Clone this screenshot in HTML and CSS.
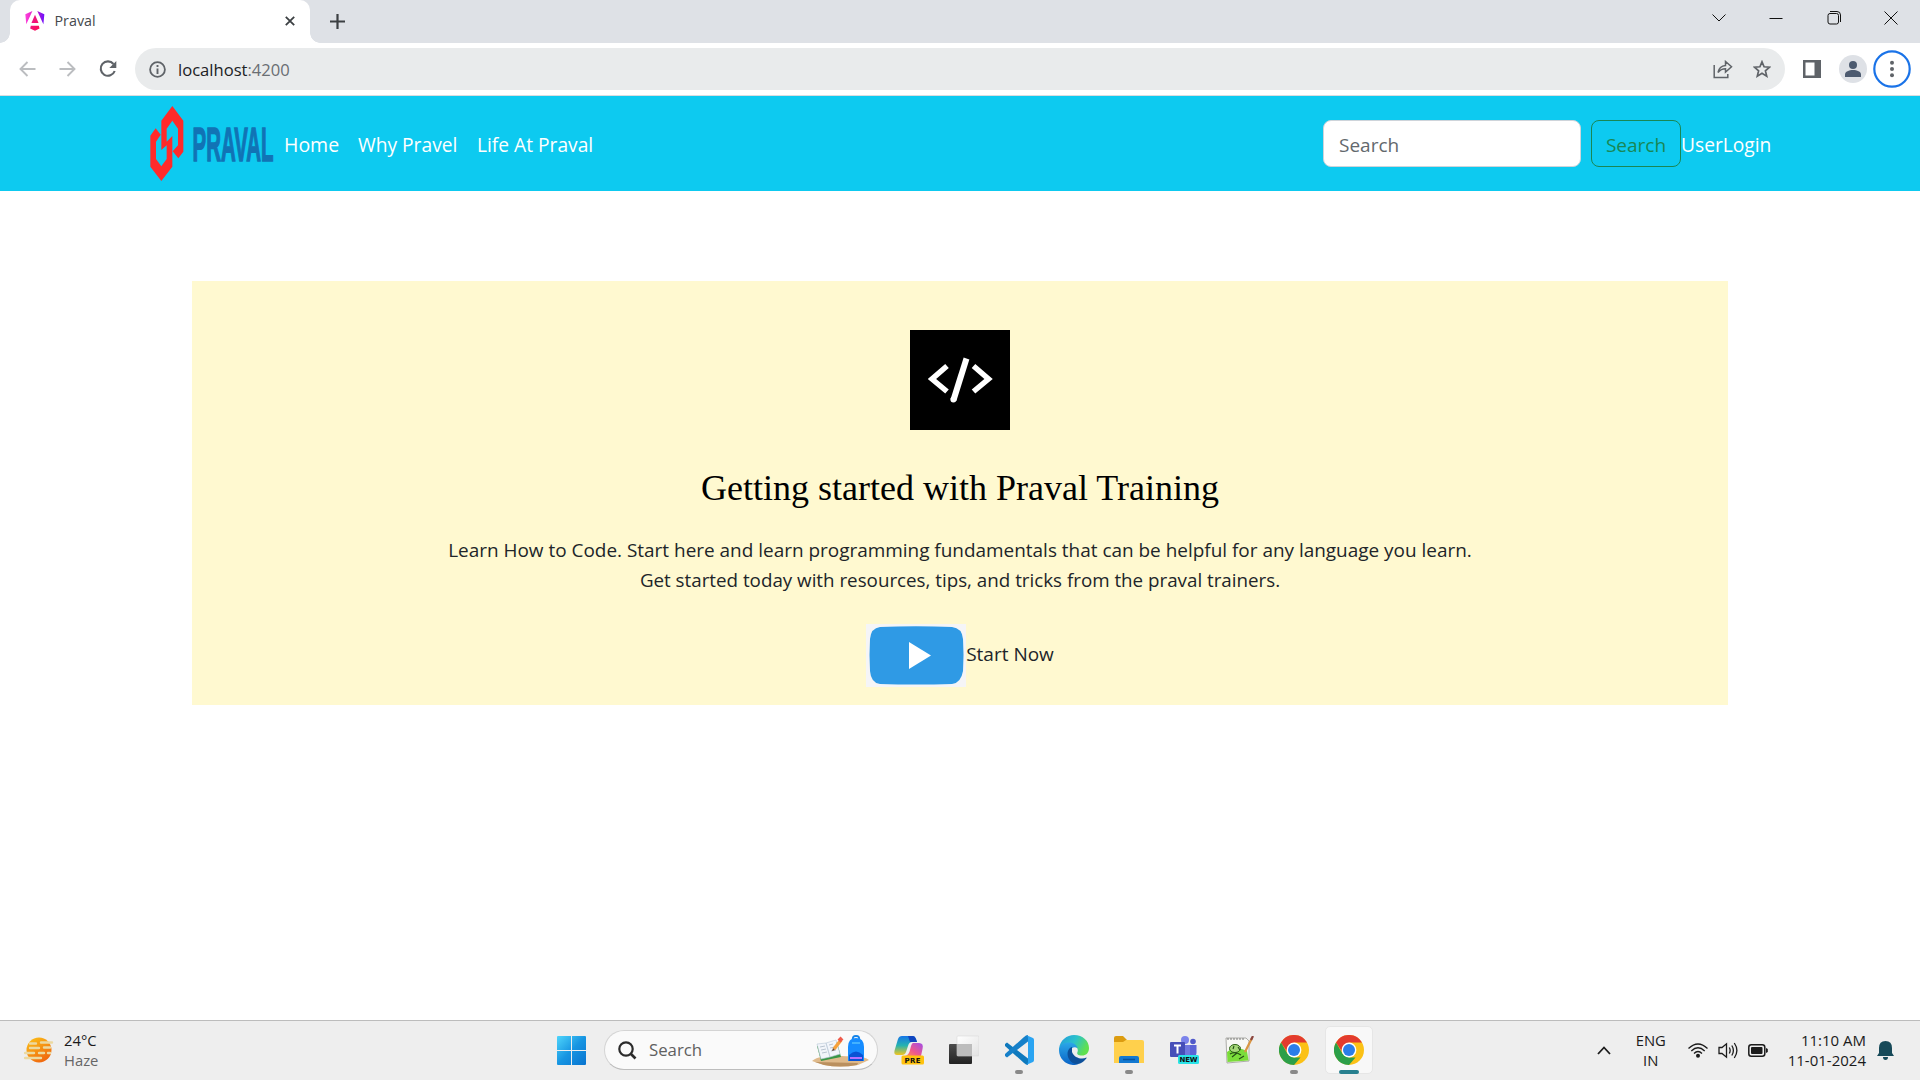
FILE: index.html
```html
<!DOCTYPE html>
<html lang="en">
<head>
<meta charset="utf-8">
<title>Praval</title>
<link rel="stylesheet" href="styles.css">
</head>
<body>
<div class="screen">
  <header class="tabstrip">
    <div class="tab">
      <svg class="favicon" width="20" height="20" viewBox="0 0 60 62">
        <defs><linearGradient id="ng" x1="0" y1="0" x2="1" y2="0"><stop offset="0" stop-color="#ff41dc"/><stop offset=".5" stop-color="#d818c0"/><stop offset="1" stop-color="#6a12ff"/></linearGradient>
        <linearGradient id="ng2" x1="0" y1="0" x2="1" y2="1"><stop offset="0" stop-color="#e61a9a"/><stop offset="1" stop-color="#ff0a50"/></linearGradient></defs>
        <path d="M0 10 22 0 3 41ZM37 0 59 10 56 41Z" fill="url(#ng)"/>
        <path d="M30 12 41 37H19ZM17 46H42L44 54 30 61 15 54Z" fill="url(#ng2)"/>
      </svg>
      <span class="tab-title">Praval</span>
      <svg class="tab-close" width="10" height="10" viewBox="0 0 10 10"><path d="M.8.8 9.2 9.2M9.2.8.8 9.2" stroke="#3c4043" stroke-width="1.800"/></svg>
    </div>
    <svg class="newtab" width="15" height="15" viewBox="0 0 15 15"><path d="M7.5 0V15M0 7.5H15" stroke="#3c4043" stroke-width="2.2"/></svg>
    <div class="window-controls">
      <svg width="14" height="14" viewBox="0 0 14 14"><path d="M.5 3.5 7 10 13.500 3.500"/></svg>
      <svg width="14" height="14" viewBox="0 0 14 14"><path d="M.5 7.500H13.500"/></svg>
      <svg width="14" height="14" viewBox="0 0 14 14"><rect x="1" y="2.500" width="10.500" height="10.500" rx="2"/><path d="M3 .5H10Q13.500 .5 13.500 4V11"/></svg>
      <svg width="14" height="14" viewBox="0 0 14 14"><path d="M.5.5 13.500 13.500M13.500.5.5 13.500"/></svg>
    </div>
  </header>

  <div class="toolbar">
    <div class="nav-buttons">
      <svg width="17" height="16" viewBox="0 0 17 16"><path d="M16.500 8H1.500M8.500 1 1.500 8 8.500 15" fill="none" stroke="#bbbdc0" stroke-width="1.900"/></svg>
      <svg width="17" height="16" viewBox="0 0 17 16"><path d="M.5 8H15.500M8.500 1 15.500 8 8.500 15" fill="none" stroke="#bbbdc0" stroke-width="1.900"/></svg>
      <svg width="18" height="18" viewBox="0 0 18 18"><path d="M14.500 4A7.200 7.200 0 1 0 15.700 11" fill="none" stroke="#5f6368" stroke-width="2.100"/><path d="M17.300 1V8H10.300Z" fill="#5f6368"/></svg>
    </div>
    <div class="omnibox">
      <svg width="17" height="17" viewBox="0 0 17 17"><circle cx="8.500" cy="8.500" r="7.400" fill="none" stroke="#5f6368" stroke-width="1.800"/><path d="M8.500 7.500V13M8.500 4V6" stroke="#5f6368" stroke-width="1.900"/></svg>
      <span class="url">localhost<span class="port">:4200</span></span>
      <svg class="share" width="20" height="19" viewBox="0 0 20 19"><path d="M1.200 5V17.500H14.800V14M5 12.500C6 7.500 8.500 5.800 12.500 5.500V1.500L18.500 6.800 12.500 12V8.800C9 8.800 7 10 5 12.500Z" fill="none" stroke="#5f6368" stroke-width="1.500"/></svg>
      <svg width="18" height="18" viewBox="0 0 18 18"><path d="M9 1.800 11.100 6.800 16.500 7.200 12.400 10.800 13.700 16.100 9 13.200 4.300 16.100 5.600 10.800 1.500 7.200 6.900 6.800Z" fill="none" stroke="#5f6368" stroke-width="1.700"/></svg>
    </div>
    <svg class="sidepanel" width="18" height="18" viewBox="0 0 18 18"><path d="M0 0H18V18H0ZM2.500 2.500V15.500H11.500V2.500Z" fill="#5f6368" fill-rule="evenodd"/></svg>
    <svg class="avatar" width="28" height="28" viewBox="0 0 28 28"><circle cx="14" cy="14" r="14" fill="#dee1e6"/><circle cx="14" cy="10" r="4" fill="#4d5b70"/><path d="M6 22V19.500C6 16.500 10 15 14 15S22 16.500 22 19.500V22Z" fill="#4d5b70"/></svg>
    <svg class="menu" width="38" height="38" viewBox="0 0 38 38"><circle cx="19" cy="19" r="17.700" fill="none" stroke="#1a73e8" stroke-width="2.200"/><g fill="#5f6368"><circle cx="19" cy="12.700" r="2"/><circle cx="19" cy="19" r="2"/><circle cx="19" cy="25.300" r="2"/></g></svg>
  </div>

  <nav class="navbar">
    <svg class="brand" width="126" height="78" viewBox="0 0 126 78">
      <path transform="translate(-149 -105) scale(.33333)" fill="#ff2a2a" d="M517 318 550 362V455L535 475 518 454 534 436V386L517 362 500 386V425L517 408V500L484 543 451 500V407L467 385 482 404 468 425V477L484 499 500 477V436L484 450V362Z"/>
      <text transform="translate(43.500 56) scale(1 2.400)" class="brand-name" textLength="81" lengthAdjust="spacingAndGlyphs">PRAVAL</text>
    </svg>
    <div class="nav-links">
      <a class="link-home">Home</a><a class="link-why">Why Pravel</a><a class="link-life">Life At Praval</a>
    </div>
    <div class="search-form">
      <div class="search-input">Search</div>
      <div class="search-button">Search</div>
      <a class="login">UserLogin</a>
    </div>
  </nav>

  <main class="content">
    <section class="hero">
      <svg class="code-icon" width="100" height="100" viewBox="0 0 100 100"><path d="M0 0H100V100H0Z"/><path d="M37 36 22 49 37 61.500M63.500 36 78.500 49 63.500 61.500" fill="none" stroke="#fff" stroke-width="5.500"/><path d="M56.500 28.500 43.500 70" stroke="#fff" stroke-width="6"/><circle cx="43.400" cy="69.600" r="3" fill="#fff"/></svg>
      <h1>Getting started with Praval Training</h1>
      <p class="line-one">Learn How to Code. Start here and learn programming fundamentals that can be helpful for any language you learn.</p>
      <p class="line-two">Get started today with resources, tips, and tricks from the praval trainers.</p>
      <div class="start">
        <svg width="100" height="63" viewBox="0 0 100 63"><path d="M0 0H100V63H0Z" fill="#f5f5f7"/><path d="M14 3Q50 1.500 86 3Q96 4 97 15Q98 31 97 47Q95 59 86 60Q50 61 14 60Q5 59 4 47Q3 31 4 15Q5 4 14 3Z" fill="#2f9ae5"/><path d="M43 18 65 31.500 43 45Z" fill="#fff"/></svg>
        <span>Start Now</span>
      </div>
    </section>
  </main>

  <footer class="taskbar">
    <div class="weather">
      <svg width="30" height="28" viewBox="0 0 30 28"><defs><linearGradient id="sun" x1="0" y1="0" x2=".6" y2="1"><stop offset="0" stop-color="#fcc419"/><stop offset="1" stop-color="#f0690f"/></linearGradient></defs><circle cx="15" cy="14" r="12.500" fill="url(#sun)"/><g stroke="#ecd9a0" stroke-width="2.400" stroke-linecap="round"><path d="M6 7.500H12M17 6.500H28M6 12H15M20 11.500H26M1 17H10M15 17H20M24 17H26M1 22H17"/></g></svg>
      <div class="weather-text"><div>24°C</div><div class="haze">Haze</div></div>
    </div>

    <svg class="start-menu" width="29" height="29" viewBox="0 0 29 29"><defs><linearGradient id="win" x1="0" y1="0" x2="29" y2="29" gradientUnits="userSpaceOnUse"><stop offset="0" stop-color="#4fd5fb"/><stop offset=".5" stop-color="#1795e2"/><stop offset="1" stop-color="#0873cf"/></linearGradient></defs><path d="M1 0H14V14H0V1Q0 0 1 0ZM15 0H28Q29 0 29 1V14H15ZM0 15H14V29H1Q0 29 0 28ZM15 15H29V28Q29 29 28 29H15Z" fill="url(#win)"/></svg>

    <div class="task-search">
      <svg width="19" height="19" viewBox="0 0 19 19"><circle cx="8" cy="8" r="6.700" fill="none" stroke="#2b2b2b" stroke-width="2.200"/><path d="M12.500 12.500 17.500 17.500" stroke="#2b2b2b" stroke-width="2.600"/></svg>
      <span>Search</span>
      <svg class="doodle" width="58" height="32" viewBox="0 0 58 32">
        <path d="M0 26C8 20 19 20 30 21S51 20 57 25L46 30Q28 33 12 30Z" fill="#dfba8b"/><path d="M3 27 46 28 45 30Q28 33 12 30Z" fill="#ba905f"/>
        <path d="M5 11 25 7 29 22 9 26Z" fill="#399646"/><path d="M5 9 14 8 18 22 9 24ZM14 8 24 5 28 19 18 22Z" fill="#f2f5fa" stroke="#b9c7d7" stroke-width=".6"/><path d="M8 12 13 11M9 15 14 14M10 18 15 17M17 10 21 9M18 13 23 12M19 16 24 15" stroke="#a9b7c5" stroke-width=".8"/>
        <path d="M22 14 29 5" stroke="#f6a13b" stroke-width="3.500"/><path d="M27 6 30 3" stroke="#ef5b4b" stroke-width="4"/><path d="M20 16 21 13 23 15Z" fill="#6a4930"/>
        <path d="M41 5Q40 1 44 1T47 5" fill="none" stroke="#1684e8" stroke-width="2"/><path d="M36 12Q36 3 44 3T52 12V26H36Z" fill="#168cff"/><path d="M37 20Q44 13 51 20V26H37Z" fill="#0753d5"/><path d="M38 23H50" stroke="#b471ff" stroke-width="2"/><path d="M40 8H48" stroke="#53bfff" stroke-width="1.500"/>
      </svg>
    </div>

    <div class="apps">
      <div class="app"><svg width="30" height="30" viewBox="0 0 30 30"><defs><linearGradient id="cpa" x1="0" y1="0" x2="0" y2="1"><stop offset="0" stop-color="#1675e8"/><stop offset=".5" stop-color="#25b3b0"/><stop offset="1" stop-color="#f4c51d"/></linearGradient><linearGradient id="cpb" x1="1" y1="0" x2="0" y2="1"><stop offset="0" stop-color="#a14de8"/><stop offset=".6" stop-color="#f0588a"/><stop offset="1" stop-color="#ff9551"/></linearGradient></defs>
        <path d="M8 1H19Q21 1 22 4L23 7H18Q15 7 14 11L12 17Q11 20 8 20H3Q-1 20 1 14L4 4Q5 1 8 1Z" fill="url(#cpa)"/><path d="M14 1H19Q21 1 22 4L23 7H16Z" fill="#0f45bf"/><path d="M19 8H25Q30 8 28.500 14L27 21H11Q15 20 16 15L17 11Q18 8 19 8Z" fill="url(#cpb)"/><rect x="7.500" y="20.500" width="22.500" height="9" rx="1.500" fill="#ffc20e"/><text x="10.500" y="27.800" class="badge-text" textLength="16">PRE</text></svg></div>
      <div class="app"><svg width="30" height="30" viewBox="0 0 30 30"><defs><linearGradient id="tva" x1="0" y1="0" x2="0" y2="1"><stop offset="0" stop-color="#4c4c4c"/><stop offset="1" stop-color="#222"/></linearGradient><linearGradient id="tvb" x1="0" y1="0" x2="1" y2="1"><stop offset="0" stop-color="#fff"/><stop offset="1" stop-color="#e2e2e2"/></linearGradient></defs><rect x="0" y="9" width="23" height="20" rx="1" fill="url(#tva)"/><rect x="8" y="1" width="22" height="20" rx="1" fill="url(#tvb)" stroke="#d8d8d8" stroke-width=".6"/><path d="M8 9H23V21H8Z" fill="#bcbcbc"/></svg></div>
      <div class="app"><svg width="30" height="30" viewBox="0 0 30 30"><path d="M1 9 3 7.500 24 23.500V30Q22 30 20 28L1 11Z" fill="#0f79bd"/><path d="M1 21 3 22.500 24 6.500V0Q22 0 20 2L1 19Z" fill="#1680c9"/><path d="M22 0 29 3Q30 3.500 30 5V25Q30 26.500 29 27L22 30Q24 29 24 27V3Q24 1 22 0Z" fill="#2aa4f2"/></svg><i class="dot"></i></div>
      <div class="app"><svg width="30" height="30" viewBox="0 0 30 30"><defs><linearGradient id="ea" x1="0" y1="0" x2="1" y2=".4"><stop offset="0" stop-color="#2398df"/><stop offset=".55" stop-color="#2bc2cb"/><stop offset="1" stop-color="#5fe050"/></linearGradient><linearGradient id="eb" x1="0" y1="0" x2="0" y2="1"><stop offset="0" stop-color="#2ba7e8"/><stop offset="1" stop-color="#0a63c6"/></linearGradient></defs><path d="M0 14C1 5 8 0 15 0C24 0 30 6 30 13C30 18 27 20.500 23 20.500C19 20.500 17.500 19 18.500 17C20 14 17 10 12 10C6 10 1 12 0 17Z" fill="url(#ea)"/><path d="M0 15C1 9 6 7.500 10 7.500C14.500 7.500 18 10 18.500 13C12 10 9 18 12 23C14 27 18 29 21 28.500C18 30 16 30 14 30C6 29.500 0 23 0 15Z" fill="url(#eb)"/><path d="M13 12C9 13 7 19 10 24C13 29.500 20 31 25 26C27 24 28 23 27.500 22.500C23 25 15 23 13 17Z" fill="#0d509a"/></svg></div>
      <div class="app"><svg width="30" height="28" viewBox="0 0 30 28"><path d="M0 2Q0 0 2 0H9L13 4H18V9H0Z" fill="#dc9c10"/><path d="M0 6H9L12 4H28Q30 4 30 6V27H0Z" fill="#ffd04c"/><path d="M5 27V22Q5 20 7 20H23Q25 20 25 22V27Z" fill="#1379d1"/><path d="M9 23.500H21" stroke="#07529d" stroke-width="1.500"/></svg><i class="dot"></i></div>
      <div class="app"><svg width="30" height="28" viewBox="0 0 30 28"><circle cx="16" cy="4" r="4" fill="#7b83eb"/><circle cx="24" cy="5.500" r="2.800" fill="#5059c9"/><path d="M18 9H27.500V17Q27 22 21 22H16Z" fill="#5b63d6"/><path d="M11 9H21V22H12Z" fill="#7077df"/><rect x="1" y="6" width="15" height="15" rx="1" fill="#464eb8"/><path d="M5 9.500H12M8.500 9.500V17.500" stroke="#fff" stroke-width="2"/><rect x="9" y="19" width="21" height="9" rx="1.500" fill="#2ae3e8"/><text x="10.500" y="26.300" class="badge-text" textLength="18">NEW</text></svg></div>
      <div class="app"><svg width="30" height="28" viewBox="0 0 30 28"><path d="M2 2H22L25 5V25L3 27Z" fill="#f8f8f5" stroke="#9a9a95" stroke-width=".8"/><path d="M3 16Q12 9 23 15L24.500 24.500 3.500 26Z" fill="#7bdc3a"/><path d="M4 2V4M7 2V4M10 2V4M13 2V4M16 2V4M19 2V4" stroke="#777"/><ellipse cx="11" cy="12.500" rx="5.500" ry="4" fill="#a5d878" stroke="#2e6315"/><path d="M6 18Q11 15 17 19M8 21 13 17M10 10 9 13M14 11 16 14M15 23 20 20" fill="none" stroke="#244b16" stroke-width="1.100"/><path d="M21 16 28 2" stroke="#d99543" stroke-width="2.200"/><path d="M27 4 29 0" stroke="#8b4640" stroke-width="2.200"/></svg></div>
      <div class="app"><svg width="30" height="30" viewBox="0 0 30 30"><circle cx="15" cy="15" r="15" fill="#fbc116"/><path d="M2 7.500A15 15 0 0 1 28 7.500H15L9 18Z" fill="#e33b2e"/><path d="M2 7.500 8.500 18.750 15 22.500H21.500L15 30A15 15 0 0 1 2 7.500Z" fill="#2c9f49"/><circle cx="15" cy="15" r="7.400" fill="#fff"/><circle cx="15" cy="15" r="6" fill="#2b7de9"/></svg><i class="dot"></i></div>
      <div class="app active"><svg width="30" height="30" viewBox="0 0 30 30"><circle cx="15" cy="15" r="15" fill="#fbc116"/><path d="M2 7.500A15 15 0 0 1 28 7.500H15L9 18Z" fill="#e33b2e"/><path d="M2 7.500 8.500 18.750 15 22.500H21.500L15 30A15 15 0 0 1 2 7.500Z" fill="#2c9f49"/><circle cx="15" cy="15" r="7.400" fill="#fff"/><circle cx="15" cy="15" r="6" fill="#2b7de9"/></svg><i class="dot"></i></div>
    </div>

    <div class="tray">
      <svg class="caret" width="14" height="9" viewBox="0 0 14 9"><path d="M1 8 7 1.500 13 8" fill="none" stroke="#1b1b1b" stroke-width="1.800"/></svg>
      <div class="lang"><div>ENG</div><div>IN</div></div>
      <svg class="wifi" width="20" height="15" viewBox="0 0 20 15"><g fill="none" stroke="#1b1b1b" stroke-width="1.300"><path d="M.5 5.500Q10-3.500 19.500 5.500M3.300 8Q10 1.500 16.700 8M6 10.500Q10 6.500 14 10.500"/></g><circle cx="10" cy="12.700" r="2" fill="#1b1b1b"/></svg>
      <svg class="volume" width="20" height="17" viewBox="0 0 20 17"><g fill="none" stroke="#1b1b1b" stroke-width="1.300"><path d="M1 5.500H4L8.500 1.800V15.200L4 11.500H1ZM11.300 5.500Q13 8.500 11.300 11.500M13.800 3.500Q17 8.500 13.800 13.500M16.300 1Q21.500 8.500 16.300 16"/></g></svg>
      <svg class="battery" width="20" height="13" viewBox="0 0 20 13"><rect x=".8" y=".8" width="16" height="11.400" rx="2.500" fill="none" stroke="#1b1b1b" stroke-width="1.500"/><rect x="3" y="3" width="11.500" height="7" rx="1" fill="#1b1b1b"/><path d="M18 4 19.800 5V8L18 9Z" fill="#1b1b1b"/></svg>
      <div class="clock"><div>11:10 AM</div><div>11-01-2024</div></div>
      <svg class="bell" width="17" height="20" viewBox="0 0 17 20"><path d="M2 13V8Q2 1 8.500 1T15 8V13L17 16H0ZM6 17H11Q11 20 8.500 20T6 17Z" fill="#174a59"/></svg>
    </div>
  </footer>
</div>
</body>
</html>
```
FILE: styles.css
```css
* { box-sizing: border-box; }
body { margin: 0; background: #fff; font-family: "Open Sans", "Noto Sans", sans-serif; }
svg { display: block; flex: none; }
.screen { width: 1920px; height: 1080px; display: flex; flex-direction: column; overflow: hidden; white-space: nowrap; }

.tabstrip { height: 43px; flex: none; background: #dee1e6; display: flex; align-items: center; padding-left: 10px; }
.tab { position: relative; width: 300px; height: 43px; background: #fff; border-radius: 10px 10px 0 0; display: flex; align-items: center; padding: 0 15px; }
.tab::before, .tab::after { content: ""; position: absolute; bottom: 0; width: 10px; height: 10px; }
.tab::before { left: -10px; background: radial-gradient(circle at 0 0, transparent 9.5px, #fff 10px); }
.tab::after { right: -10px; background: radial-gradient(circle at 100% 0, transparent 9.5px, #fff 10px); }
.favicon { margin-top: -1px; }
.tab-title { flex: 1; margin: -2px 0 0 9.5px; font-size: 14.3px; color: #45494d; }
.tab-close { margin-top: -1px; }
.newtab { margin-left: 20px; }
.window-controls { margin: -7px 22px 0 auto; display: flex; gap: 43.3px; fill: none; stroke: #111; stroke-width: 1px; }

.toolbar { height: 53px; flex: none; background: #fff; border-bottom: 1px solid #dadce0; display: flex; align-items: center; }
.nav-buttons { width: 135px; display: flex; align-items: center; gap: 23px; padding: 0 0 1px 19px; }
.omnibox { width: 1650px; height: 42px; border-radius: 21px; background: #e9ebec; display: flex; align-items: center; padding: 0 14px; }
.url { margin: 0 auto 0 12px; font-size: 16.6px; color: #202124; }
.port { color: #6a6e73; }
.share { margin-right: 20px; }
.sidepanel { margin-left: 18px; }
.avatar { margin-left: 18px; }
.menu { margin: -1px 0 0 6px; }

.navbar { height: 95px; flex: none; background: #0dcaf0; display: flex; align-items: center; padding: 0 149px; color: #fff; font-size: 19.2px; }
.brand-name { font: bold 20px "Liberation Sans", Arial, sans-serif; fill: #1173b5; stroke: #1173b5; stroke-width: .6px; }
.nav-links { display: flex; align-items: center; padding-left: 9px; margin-top: 2px; }
.link-home { width: 74px; font-size: 19.5px; }
.link-why { width: 119px; }
.search-form { margin-left: auto; display: flex; align-items: center; }
.search-input, .search-button { height: 47px; border-radius: 8px; padding: 10px 0 8px; line-height: 29px; font-size: 19px; }
.search-input { width: 258px; border: 1px solid #ced4da; background: #fff; color: #63686d; padding-left: 15px; margin-right: 10px; }
.search-button { width: 90px; border: 1px solid #198754; color: #198754; text-align: center; }
.login { margin: 2px 0 0 0; width: 90px; }

.content { flex: 1; padding: 90px 192px 0; }
.hero { height: 424px; background: #fff9d0; display: flex; flex-direction: column; align-items: center; padding-top: 49px; color: #212529; }
h1 { margin: 36px 0 25px; font: normal 36px/44px "Liberation Serif", "Times New Roman", serif; color: #000; }
p { margin: 0; line-height: 30px; }
.line-one { font-size: 18.95px; }
.line-two { font-size: 18.78px; }
.start { display: flex; align-items: center; margin-top: 29px; font-size: 19px; }
.start span { line-height: 30px; margin-top: -4px; }

.taskbar { height: 60px; flex: none; border-top: 1px solid #bcbcbc; background: #eee; display: flex; align-items: center; padding-bottom: 1px; font-size: 14.8px; line-height: 20px; color: #1b1b1b; }
.weather { width: 557px; display: flex; align-items: center; padding-left: 24px; }
.weather-text { margin: -1px 0 0 10px; }
.haze { color: #666; }
.task-search { width: 274px; height: 40px; margin-left: 18px; border: 1px solid #d4d4d4; border-bottom-color: #bdbdbd; border-radius: 20px; background: #fafafa; display: flex; align-items: center; padding: 0 7px 0 13px; font-size: 16.8px; color: #606060; }
.task-search span { margin: 0 auto 0 12px; }
.doodle { margin-top: 2px; }
.apps { display: flex; margin-left: 3px; }
.app { position: relative; width: 55px; height: 58px; display: flex; align-items: center; justify-content: center; }
.active::before { content: ""; position: absolute; inset: 5px 3.5px; border-radius: 5px; border: 1px solid #e6e6e6; background: #f8f8f8; }
.active svg { position: relative; }
.dot { position: absolute; bottom: 5px; width: 8px; height: 4px; border-radius: 2px; background: #898989; }
.active .dot { width: 20px; background: #27808f; }
.badge-text { font: bold 7px "DejaVu Sans", sans-serif; fill: #111; }
.tray { margin-left: auto; display: flex; align-items: center; padding-right: 26.5px; }
.lang { text-align: center; width: 36px; margin: -1px 0 0 22px; }
.wifi { margin-left: 19px; }
.volume { margin-left: 10px; }
.battery { margin-left: 10px; }
.clock { text-align: right; margin: -1px 0 0 20px; font-size: 15px; }
.bell { margin-left: 10.5px; }
```
